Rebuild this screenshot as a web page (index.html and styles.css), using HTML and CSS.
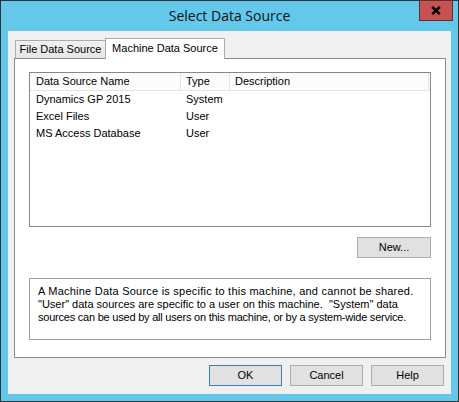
FILE: index.html
```html
<!DOCTYPE html>
<html>
<head>
<meta charset="utf-8">
<link rel="stylesheet" href="styles.css">
</head>
<body>
<div class="window">
  <div class="titlebar">
    <span class="title">Select Data Source</span>
    <div class="close">
      <svg width="10" height="9" viewBox="0 0 10 9"><path d="M1.2 0.8 L8.8 8.2 M8.8 0.8 L1.2 8.2" stroke="#000" stroke-width="2.4" fill="none"/></svg>
    </div>
  </div>
  <div class="client">
    <div class="tabs">
      <div class="tab">File Data Source</div>
      <div class="tab active">Machine Data Source</div>
    </div>
    <div class="panel">
      <div class="list">
        <div class="row header">
          <div class="c1">Data Source Name</div>
          <div class="c2">Type</div>
          <div class="c3">Description</div>
        </div>
        <div class="row">
          <div class="c1">Dynamics GP 2015</div>
          <div class="c2">System</div>
          <div class="c3"></div>
        </div>
        <div class="row">
          <div class="c1">Excel Files</div>
          <div class="c2">User</div>
          <div class="c3"></div>
        </div>
        <div class="row">
          <div class="c1">MS Access Database</div>
          <div class="c2">User</div>
          <div class="c3"></div>
        </div>
      </div>
      <div class="btn new">New...</div>
      <div class="info">
        <div class="line l1">A Machine Data Source is specific to this machine, and cannot be shared.</div>
        <div class="line l2">"User" data sources are specific to a user on this machine.&nbsp; "System" data</div>
        <div class="line l3">sources can be used by all users on this machine, or by a system-wide service.</div>
      </div>
    </div>
    <div class="buttons">
      <div class="btn default">OK</div>
      <div class="btn">Cancel</div>
      <div class="btn">Help</div>
    </div>
  </div>
</div>
</body>
</html>
```
FILE: styles.css
```css
html, body {
  margin: 0;
  padding: 0;
}
body {
  width: 459px;
  height: 402px;
  overflow: hidden;
  font-family: "Liberation Sans", Arial, sans-serif;
  font-size: 11px;
  color: #000;
}
.window {
  position: relative;
  box-sizing: border-box;
  width: 459px;
  height: 402px;
  border: 1px solid #2e3436;
  background: #63c8e9;
  padding: 0 7px 7px 7px;
  display: flex;
  flex-direction: column;
}
.titlebar {
  height: 30px;
  flex: none;
  display: flex;
  align-items: center;
  justify-content: center;
  padding-bottom: 2px;
  box-sizing: border-box;
}
.title {
  font-family: "Open Sans", "Noto Sans", sans-serif;
  font-size: 14px;
  color: #111;
}
.close {
  position: absolute;
  top: -1px;
  right: 5px;
  width: 34px;
  height: 21px;
  box-sizing: border-box;
  border: 1px solid #5a3030;
  background: #c75050;
  display: flex;
  align-items: center;
  justify-content: center;
}
.client {
  flex: 1;
  background: #f0f0f0;
  display: flex;
  flex-direction: column;
  padding: 7px 5px 0 6px;
}
.tabs {
  display: flex;
  align-items: flex-end;
  height: 20px;
  flex: none;
  position: relative;
  z-index: 1;
}
.tab {
  box-sizing: border-box;
  height: 18px;
  width: 91px;
  margin-left: 1px;
  border: 1px solid #acacac;
  border-bottom: none;
  background: linear-gradient(#f0f0f0, #e5e5e5);
  text-align: center;
  line-height: 17px;
}
.tab.active {
  width: 120px;
  height: 21px;
  margin-left: -1px;
  margin-bottom: -1px;
  background: #fff;
  line-height: 19px;
}
.panel {
  box-sizing: border-box;
  height: 300px;
  flex: none;
  border: 1px solid #898c95;
  background: #fff;
  padding: 13px 14px 0 14px;
  display: flex;
  flex-direction: column;
}
.list {
  box-sizing: border-box;
  height: 155px;
  border: 1px solid #828790;
  flex: none;
}
.row {
  display: flex;
  height: 17px;
  line-height: 17px;
}
.row.header {
  height: 17px;
  line-height: 16px;
  background: #fcfcfc;
  border-bottom: 1px solid #e5e5e5;
}
.c1, .c2, .c3 {
  box-sizing: border-box;
  white-space: nowrap;
  overflow: hidden;
}
.c1 { width: 151px; padding-left: 6px; }
.c2 { width: 49px; padding-left: 5px; }
.c3 { width: 199px; padding-left: 5px; }
.header .c1, .header .c2, .header .c3 {
  border-right: 1px solid #e5e5e5;
}
.btn {
  box-sizing: border-box;
  width: 73px;
  height: 21px;
  border: 1px solid #adadad;
  background: #e1e1e1;
  text-align: center;
  line-height: 19px;
}
.btn.new {
  width: 74px;
  margin-top: 10px;
  align-self: flex-end;
}
.btn.default {
  border-color: #3c7fb1;
}
.info {
  box-sizing: border-box;
  height: 62px;
  margin-top: 20px;
  border: 1px solid #a0a0a0;
  padding: 6px 0 0 8px;
  line-height: 13px;
  white-space: nowrap;
}
.l1 { letter-spacing: 0.23px; }
.l3 { letter-spacing: -0.22px; }
.buttons {
  display: flex;
  justify-content: flex-end;
  gap: 8px;
  margin-top: 7px;
  padding-right: 2px;
}
```
